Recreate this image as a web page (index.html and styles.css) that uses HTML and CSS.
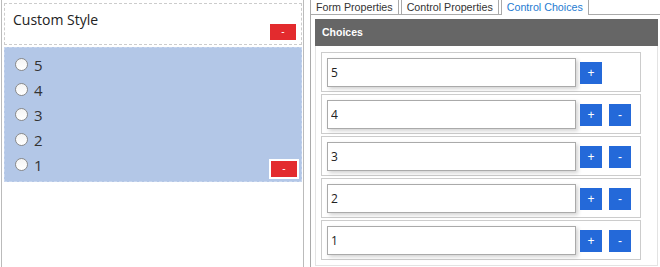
FILE: index.html
```html
<!DOCTYPE html>
<html lang="en">
<head>
    <meta charset="UTF-8">
    <title>Form Designer</title>
    <link rel="stylesheet" href="styles.css">
</head>
<body>
    <div class="page">
        <div class="designer">
            <div class="field-title">
                <span class="title-text">Custom Style</span>
                <button class="btn-remove">-</button>
            </div>
            <div class="field-choices">
                <label class="choice"><span class="radio"></span><span>5</span></label>
                <label class="choice"><span class="radio"></span><span>4</span></label>
                <label class="choice"><span class="radio"></span><span>3</span></label>
                <label class="choice"><span class="radio"></span><span>2</span></label>
                <label class="choice"><span class="radio"></span><span>1</span>
                    <button class="btn-remove framed">-</button>
                </label>
            </div>
        </div>

        <div class="props">
            <div class="tabs">
                <div class="tab">Form Properties</div>
                <div class="tab">Control Properties</div>
                <div class="tab active">Control Choices</div>
            </div>
            <div class="tab-body">
                <div class="panel">
                    <div class="panel-head">Choices</div>
                    <div class="panel-body">
                        <div class="choice-row">
                            <input class="choice-input" type="text" value="5" spellcheck="false">
                            <button class="btn-blue">+</button>
                        </div>
                        <div class="choice-row">
                            <input class="choice-input" type="text" value="4" spellcheck="false">
                            <button class="btn-blue">+</button>
                            <button class="btn-blue minus">-</button>
                        </div>
                        <div class="choice-row">
                            <input class="choice-input" type="text" value="3" spellcheck="false">
                            <button class="btn-blue">+</button>
                            <button class="btn-blue minus">-</button>
                        </div>
                        <div class="choice-row">
                            <input class="choice-input" type="text" value="2" spellcheck="false">
                            <button class="btn-blue">+</button>
                            <button class="btn-blue minus">-</button>
                        </div>
                        <div class="choice-row">
                            <input class="choice-input" type="text" value="1" spellcheck="false">
                            <button class="btn-blue">+</button>
                            <button class="btn-blue minus">-</button>
                        </div>
                    </div>
                </div>
            </div>
        </div>
    </div>
</body>
</html>
```

FILE: styles.css
```css
body {
    margin: 0;
    font-family: 'Open Sans', 'Noto Sans', sans-serif;
    color: #222;
    background: white;
    overflow: hidden;
}

.page {
    display: flex;
    align-items: flex-start;
    height: 100vh;
    overflow: hidden;
}

/* left: the form being designed */
.designer {
    flex: none;
    box-sizing: border-box;
    width: 303px;
    height: 100vh;
    margin-left: 1px;
    padding: 3px 1px 0 2px;
    border-left: 1px solid #bbb;
    border-right: 1px solid #bbb;
}

.field-title {
    box-sizing: border-box;
    height: 42px;
    display: flex;
    justify-content: space-between;
    padding: 6px 5px 4px 8px;
    border: 1px dashed #ccc;
}

.title-text {
    font-size: 14px;
    line-height: 20px;
}

.btn-remove {
    align-self: flex-end;
    width: 26px;
    height: 16px;
    padding: 0;
    border: none;
    background: #e32b2e;
    color: white;
    font-family: 'Liberation Sans', sans-serif;
    font-size: 10px;
    line-height: 16px;
}

.btn-remove.framed {
    align-self: center;
    box-sizing: content-box;
    margin: 9px 0 0 auto;
    border: 2px solid white;
}

.field-choices {
    margin-top: 2px;
    padding: 4px 2px 4px 10px;
    background: #b3c7e7;
    border: 1px dashed #c8d6ee;
}

.choice {
    display: flex;
    align-items: center;
    height: 25px;
    font-size: 15px;
    color: #333;
}

.radio {
    box-sizing: border-box;
    width: 13px;
    height: 13px;
    margin-right: 6px;
    border: 1px solid #8a8a8a;
    border-radius: 50%;
    background: linear-gradient(#f4f4f4, white);
}

/* right: properties tabs */
.props {
    flex: none;
    margin-left: 6px;
}

.tabs {
    display: flex;
    align-items: flex-end;
    margin-top: -3px;
    font-family: 'Liberation Sans', Arial, sans-serif;
    font-size: 10.7px;
}

.tab {
    padding: 3px 5px 0;
    margin-right: 2px;
    line-height: 13px;
    border: 1px solid #aaa;
    border-bottom: none;
    color: #333;
    background: white;
}

.tab.active {
    color: #1e7bd1;
    padding-bottom: 1px;
    margin-bottom: -1px;
    position: relative;
}

.tab-body {
    box-sizing: border-box;
    width: 363px;
    height: 253px;
    padding: 4px;
    border: 1px solid #aaa;
    border-bottom: none;
}

.panel {
    width: 343px;
}

.panel-head {
    height: 27px;
    padding-left: 7px;
    background: #666;
    color: white;
    font-family: 'Liberation Sans', Arial, sans-serif;
    font-size: 10.5px;
    font-weight: bold;
    line-height: 27px;
}

.panel-body {
    display: flex;
    flex-direction: column;
    gap: 2px;
    padding: 6px 5px 5px;
    border: 1px solid #e3e3e3;
    border-top: none;
}

.choice-row {
    box-sizing: border-box;
    width: 320px;
    height: 40px;
    display: flex;
    align-items: center;
    padding: 5px 5px 4px;
    border: 1px solid #ccc;
}

.choice-input {
    box-sizing: border-box;
    width: 249px;
    height: 29px;
    margin: 0;
    padding: 0 3px;
    border: 1px solid #aaa;
    box-shadow: 2px 2px 4px rgba(0, 0, 0, 0.18);
    font-family: 'Open Sans', 'Noto Sans', sans-serif;
    font-size: 12px;
    color: #222;
    outline: none;
}

.btn-blue {
    width: 22px;
    height: 22px;
    margin-left: 4px;
    padding: 0;
    border: none;
    background: #2469d9;
    color: white;
    font-family: 'Liberation Sans', sans-serif;
    font-size: 12px;
    line-height: 22px;
}

.btn-blue.minus {
    margin-left: 7px;
}
```
